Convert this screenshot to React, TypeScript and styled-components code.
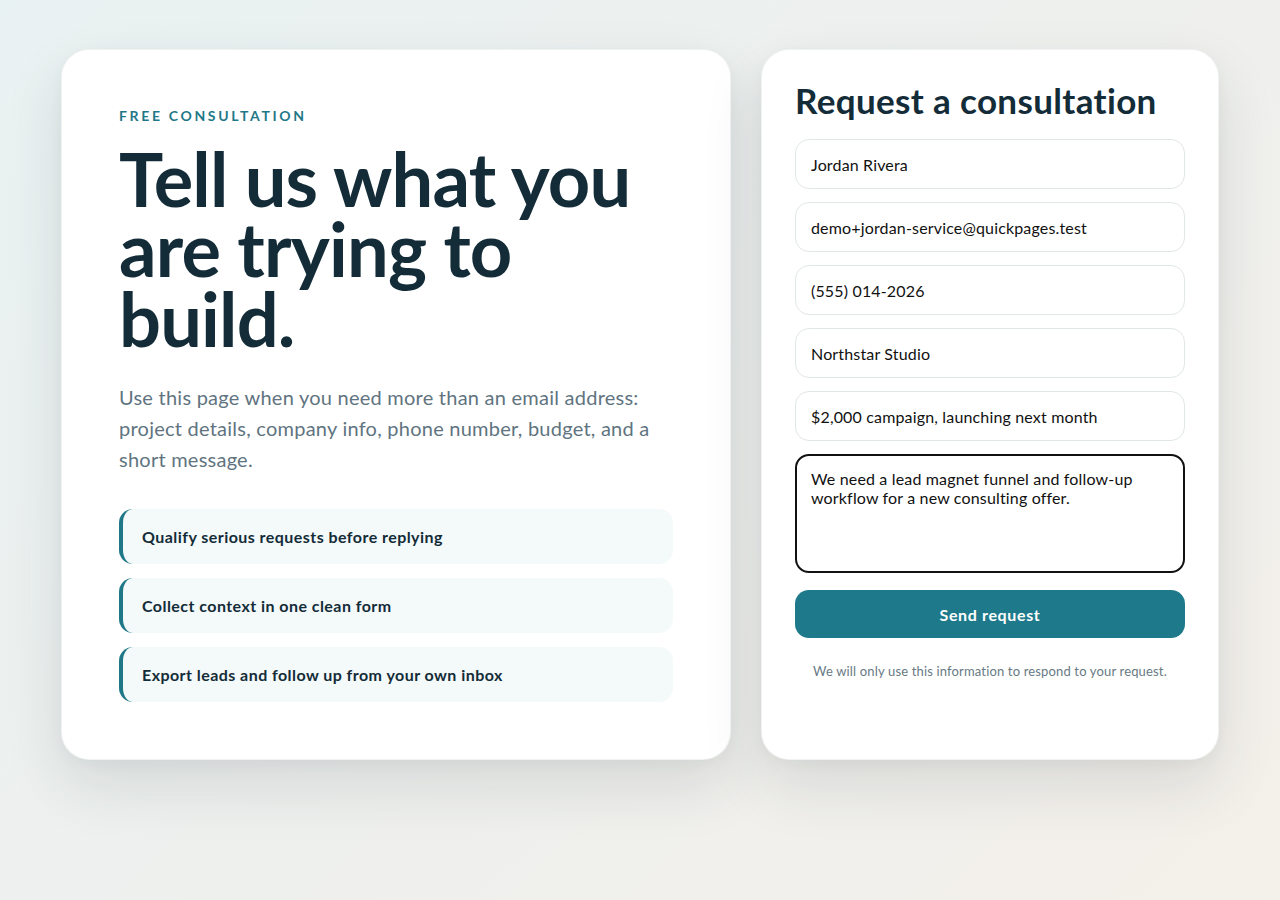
import React from "react";
import styled, { createGlobalStyle } from "styled-components";

const FONT = `"Lato", "Liberation Sans", sans-serif`;

const GlobalStyle = createGlobalStyle`
  * { box-sizing: border-box; }
  html, body { margin: 0; padding: 0; }
  body {
    min-height: 900px;
    font-family: ${FONT};
    background: linear-gradient(135deg, #e9f2f2 0%, #eef0ee 50%, #f4f0ea 100%);
    color: #132c38;
  }
`;

const Page = styled.main`
  min-height: 900px;
  padding: 49px 61px;
  display: grid;
  grid-template-columns: 670px 458px;
  gap: 30px;
  align-items: stretch;
  align-content: start;
`;

const Card = styled.section<{ $pad: string }>`
  background: #ffffff;
  border-radius: 28px;
  padding: ${(p) => p.$pad};
  border: 1px solid rgba(20, 44, 56, 0.06);
  box-shadow: 0 26px 60px rgba(30, 48, 56, 0.12), 0 4px 14px rgba(30, 48, 56, 0.04);
  height: 711px;
`;

const Eyebrow = styled.div`
  font-size: 14px;
  font-weight: 700;
  letter-spacing: 0.19em;
  color: #1f7888;
  text-transform: uppercase;
  line-height: 16px;
`;

const Headline = styled.h1`
  margin: 20px 0 0;
  font-size: 74px;
  line-height: 70px;
  font-weight: 700;
  letter-spacing: -0.011em;
  color: #132c38;
`;

const Lead = styled.p`
  margin: 28px 0 0;
  font-size: 20px;
  line-height: 31px;
  letter-spacing: 0.012em;
  color: #5f7480;
`;

const Points = styled.ul`
  list-style: none;
  margin: 34px 0 0;
  padding: 0;
  display: flex;
  flex-direction: column;
  gap: 14px;
`;

const Point = styled.li`
  height: 55px;
  display: flex;
  align-items: center;
  padding: 0 19px;
  background: #f4f9fa;
  border-left: 4px solid #1f7888;
  border-radius: 14px;
  font-size: 16px;
  font-weight: 700;
  letter-spacing: 0.028em;
  color: #132c38;
`;

const FormTitle = styled.h2`
  margin: 0;
  font-size: 35px;
  line-height: 40px;
  font-weight: 700;
  letter-spacing: 0.01em;
  color: #132c38;
`;

const Form = styled.form`
  margin-top: 19px;
  display: flex;
  flex-direction: column;
  gap: 13px;
`;

const Field = styled.input`
  height: 50px;
  width: 100%;
  padding: 0 15px;
  border: 1px solid #e1e6e8;
  border-radius: 14px;
  background: #fff;
  font-family: ${FONT};
  font-size: 16px;
  letter-spacing: 0.01em;
  color: #111;
  outline: none;
`;

const Message = styled.textarea`
  height: 119px;
  width: 100%;
  padding: 13px 14px;
  border: 2px solid #111;
  border-radius: 14px;
  background: #fff;
  font-family: ${FONT};
  font-size: 16px;
  line-height: 19px;
  letter-spacing: 0.01em;
  color: #111;
  resize: none;
  outline: none;
`;

const Submit = styled.button`
  margin-top: 4px;
  height: 48px;
  border: none;
  border-radius: 14px;
  background: #1e7a8a;
  color: #fff;
  font-family: ${FONT};
  font-size: 16px;
  font-weight: 700;
  letter-spacing: 0.04em;
  cursor: pointer;
`;

const Note = styled.p`
  margin: 25px 0 0;
  text-align: center;
  font-size: 13px;
  letter-spacing: 0.012em;
  color: #687a84;
`;

export default function App() {
  return (
    <>
      <GlobalStyle />
      <Page>
        <Card $pad="58px 57px">
          <Eyebrow>Free consultation</Eyebrow>
          <Headline>
            Tell us what you
            <br />
            are trying to
            <br />
            build.
          </Headline>
          <Lead>
            Use this page when you need more than an email address: project details, company info,
            phone number, budget, and a short message.
          </Lead>
          <Points>
            <Point>Qualify serious requests before replying</Point>
            <Point>Collect context in one clean form</Point>
            <Point>Export leads and follow up from your own inbox</Point>
          </Points>
        </Card>
        <Card $pad="30px 33px">
          <FormTitle>Request a consultation</FormTitle>
          <Form onSubmit={(e) => e.preventDefault()}>
            <Field defaultValue="Jordan Rivera" />
            <Field defaultValue="demo+jordan-service@quickpages.test" />
            <Field defaultValue="(555) 014-2026" />
            <Field defaultValue="Northstar Studio" />
            <Field defaultValue="$2,000 campaign, launching next month" />
            <Message defaultValue="We need a lead magnet funnel and follow-up workflow for a new consulting offer." />
            <Submit type="submit">Send request</Submit>
          </Form>
          <Note>We will only use this information to respond to your request.</Note>
        </Card>
      </Page>
    </>
  );
}
